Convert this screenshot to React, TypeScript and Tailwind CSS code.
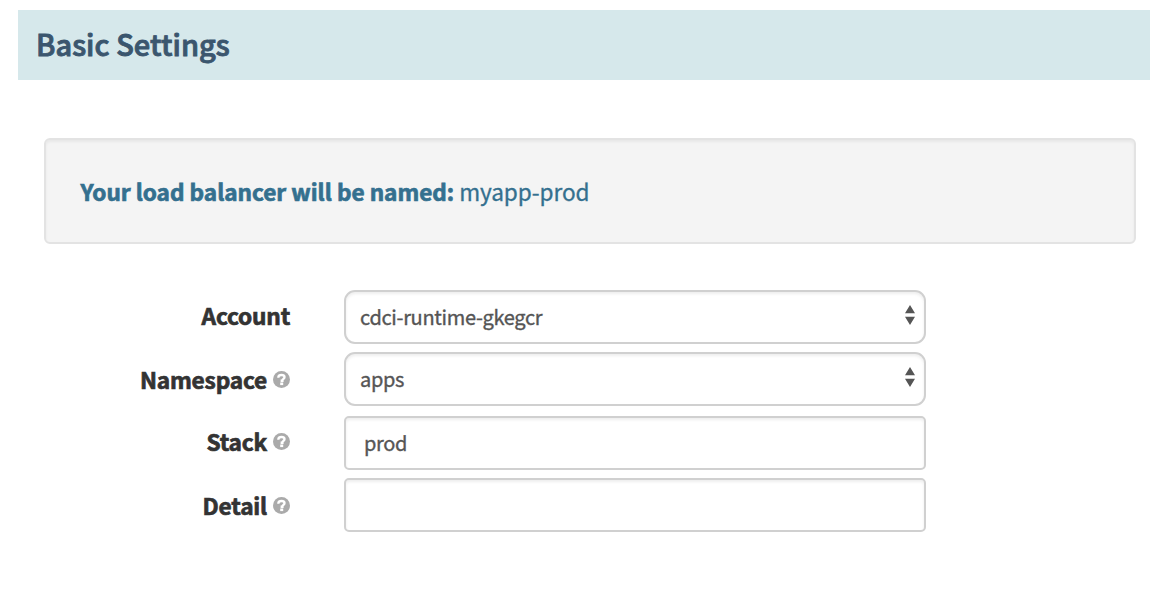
import React from "react";

function HelpIcon() {
  return (
    <svg viewBox="0 0 17 17" className="ml-1.5 h-[17px] w-[17px] shrink-0" aria-label="Help">
      <circle cx="8.5" cy="8.5" r="8.5" fill="#aaaaaa" />
      <path
        d="M5.4 6.8V6Q5.6 4 8.6 4Q11.5 4 11.5 6.1Q11.5 7.3 10.3 8Q9.4 8.5 9.4 9.8H7.6"
        fill="none"
        stroke="#fff"
        strokeWidth="2.4"
      />
      <rect x="7.2" y="11.5" width="3" height="2.6" fill="#fff" />
    </svg>
  );
}

function Arrows() {
  return (
    <svg viewBox="0 0 10 20" className="mb-1 h-5 w-2.5 shrink-0" fill="#555">
      <path d="M5 0L10 8.2H0ZM0 11.8H10L5 20Z" />
    </svg>
  );
}

function Label({ text, help = false, raised = false }: { text: string; help?: boolean; raised?: boolean }) {
  return (
    <div
      className={`flex w-[290px] shrink-0 items-center justify-end text-[22.7px] leading-[30px] font-bold tracking-[-0.2px] text-[#333] [-webkit-text-stroke:0.7px_#333] ${raised ? "pb-1" : ""}`}
    >
      <span className="pt-0.5">{text}</span>
      {help && <HelpIcon />}
    </div>
  );
}

const field =
  "flex h-[54px] w-[582px] items-center justify-between border-2 border-[#d0d0d0] bg-white text-[20px] leading-[30px] tracking-[-0.32px] text-[#555] [-webkit-text-stroke:0.35px_#555] shadow-[inset_0_2px_3px_rgba(0,0,0,0.07)]";

export default function App() {
  return (
    <main className="h-[590px] w-[1150px] overflow-hidden bg-white pt-2.5 font-['Noto_Sans_CJK_SC',sans-serif]">
      <header className="ml-[18px] flex h-[70px] items-center bg-[#d6e8eb] pb-1 pl-[18px]">
        <h1 className="text-[29px] leading-10 font-medium tracking-[0.06px] text-[#3b566e] [-webkit-text-stroke:0.9px_#3b566e]">
          Basic Settings
        </h1>
      </header>

      <section className="mt-[58px] mr-3.5 ml-11 flex h-[106px] items-center rounded-md border-2 border-[#e3e3e3] bg-[#f4f4f4] pl-[34.5px] text-[22.6px] leading-[34px] tracking-[-0.08px] text-[#34708f] [-webkit-text-stroke:0.3px_#34708f] shadow-[inset_0_2px_3px_rgba(0,0,0,0.05)]">
        <p className="pt-0.5">
          <strong className="font-bold tracking-[-0.02px] [-webkit-text-stroke:0.7px_#34708f]">
            Your load balancer will be named:
          </strong>{" "}
          myapp-prod
        </p>
      </section>

      <form className="mt-[46px] flex flex-col">
        <div className="mb-2 flex items-center gap-[54px]">
          <Label text="Account" raised />
          <div className={`${field} rounded-[11px] pr-[9px] pl-3.5`}>
            <span>cdci-runtime-gkegcr</span>
            <Arrows />
          </div>
        </div>
        <div className="mb-2.5 flex items-center gap-[54px]">
          <Label text="Namespace" help />
          <div className={`${field} rounded-[11px] pr-[9px] pl-3.5`}>
            <span>apps</span>
            <Arrows />
          </div>
        </div>
        <div className="mb-2 flex items-center gap-[54px]">
          <Label text="Stack" help raised />
          <div className={`${field} rounded-[5px] pl-[18px]`}>
            <span>prod</span>
          </div>
        </div>
        <div className="flex items-center gap-[54px]">
          <Label text="Detail" help />
          <div className={`${field} rounded-[5px]`} />
        </div>
      </form>
    </main>
  );
}
